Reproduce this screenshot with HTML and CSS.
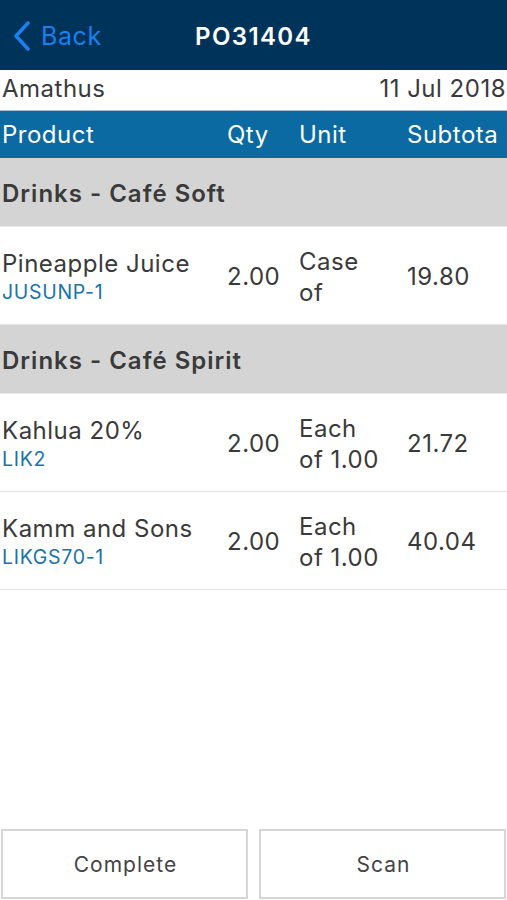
FILE: index.html
```html
<!DOCTYPE html>
<html>
<head>
<meta charset="utf-8">
<link rel="stylesheet" href="styles.css">
</head>
<body>
<div class="app">
  <header class="nav">
    <div class="back">
      <svg class="chev" width="20" height="32" viewBox="0 0 20 32"><path d="M16 3 L4 16 L16 29" fill="none" stroke="#1a80ee" stroke-width="3.6" stroke-linecap="round" stroke-linejoin="round"/></svg>
      <span>Back</span>
    </div>
    <div class="title">PO31404</div>
  </header>
  <div class="info">
    <span>Amathus</span>
    <span>11 Jul 2018</span>
  </div>
  <div class="cols">
    <span class="c1">Product</span>
    <span>Qty</span>
    <span>Unit</span>
    <span>Subtota</span>
  </div>
  <main class="list">
    <div class="section">Drinks - Café Soft</div>
    <div class="item">
      <div class="c1 prod"><div>Pineapple Juice</div><div class="code">JUSUNP-1</div></div>
      <div>2.00</div>
      <div class="unit">Case<br>of</div>
      <div>19.80</div>
    </div>
    <div class="section">Drinks - Café Spirit</div>
    <div class="item">
      <div class="c1 prod"><div>Kahlua 20%</div><div class="code">LIK2</div></div>
      <div>2.00</div>
      <div class="unit">Each<br>of 1.00</div>
      <div>21.72</div>
    </div>
    <div class="item">
      <div class="c1 prod"><div>Kamm and Sons</div><div class="code">LIKGS70-1</div></div>
      <div>2.00</div>
      <div class="unit">Each<br>of 1.00</div>
      <div>40.04</div>
    </div>
  </main>
  <footer class="actions">
    <button class="btn">Complete</button>
    <button class="btn">Scan</button>
  </footer>
</div>
</body>
</html>
```
FILE: styles.css
```css
* { box-sizing: border-box; }
html, body { margin: 0; padding: 0; }
body {
  font-family: "Inter", "Liberation Sans", Arial, sans-serif;
  background: #fff;
  color: #3a3a3a;
  width: 507px;
  overflow: hidden;
  letter-spacing: 0.5px;
}
.app {
  height: 900px;
  display: flex;
  flex-direction: column;
}
.nav {
  height: 70px;
  background: #00335a;
  display: flex;
  align-items: center;
  position: relative;
}
.back {
  display: flex;
  align-items: center;
  gap: 9px;
  padding-left: 12px;
  color: #1a80ee;
  font-size: 25px;
  padding-top: 2px;
  letter-spacing: 0.6px;
}
.chev { display: block; }
.title {
  position: absolute;
  left: 0; right: 0;
  top: 22px;
  text-align: center;
  color: #fff;
  font-weight: 600;
  font-size: 24px;
  letter-spacing: 1.4px;
  pointer-events: none;
}
.info {
  height: 41px;
  display: flex;
  justify-content: space-between;
  align-items: center;
  padding: 0 1px 3px 2px;
  font-size: 24px;
  color: #3a3a3a;
  border-bottom: 1px solid #a8bfcf;
}
.cols {
  height: 47px;
  background: #0b6aa1;
  color: #fff;
  font-size: 24px;
  display: grid;
  grid-template-columns: 227px 72px 108px 100px;
  align-items: center;
  white-space: nowrap;
  overflow: hidden;
  padding-bottom: 1px;
}
.c1 { padding-left: 2px; }
.list { flex: 1; }
.section {
  height: 69px;
  background: #d4d4d4;
  display: flex;
  align-items: center;
  padding-left: 2px;
  padding-top: 2px;
  font-weight: 600;
  font-size: 24px;
  letter-spacing: 1px;
  color: #3a3a3a;
  border-bottom: 1px solid #e6e6e6;
}
.item {
  height: 98px;
  display: grid;
  grid-template-columns: 227px 72px 108px 100px;
  align-items: center;
  font-size: 24px;
  color: #3a3a3a;
  border-bottom: 1px solid #e2e2e2;
  padding-top: 2px;
}
.prod { line-height: 30px; }
.code { color: #1a73a8; font-size: 19.5px; line-height: 26px; letter-spacing: 0.7px; }
.unit { line-height: 31px; }
.actions {
  display: flex;
  gap: 11px;
  padding: 0 1px 1px 1px;
}
.btn {
  flex: 1;
  height: 70px;
  background: #fff;
  border: 2px solid #d6d6d6;
  font-family: inherit;
  font-size: 21px;
  letter-spacing: 1px;
  color: #444;
  padding: 0 0 0 2px;
}
```
